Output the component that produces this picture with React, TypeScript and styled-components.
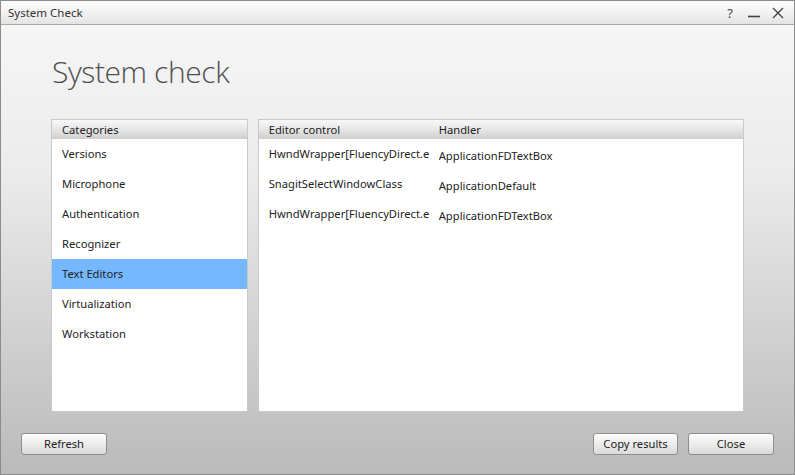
import React, {useState} from "react";
import styled, {createGlobalStyle} from "styled-components";

const GlobalStyle = createGlobalStyle`
  html, body {
    margin: 0;
    padding: 0;
    width: 795px;
    height: 475px;
    overflow: hidden;
    font-family: "Noto Sans", "Open Sans", sans-serif;
  }
`;

const Window = styled.div`
  width: 795px;
  height: 475px;
  box-sizing: border-box;
  border: 1px solid #8c8c8c;
  display: flex;
  flex-direction: column;
  background: linear-gradient(to bottom, #f7f7f7 0%, #ececec 35%, #bababa 100%);
`;

const TitleBar = styled.div`
  height: 24px;
  flex: none;
  box-sizing: border-box;
  display: flex;
  align-items: center;
  justify-content: space-between;
  padding: 0 4px 0 7px;
  background: linear-gradient(to bottom, #ffffff 0%, #e4e4e4 100%);
  border-bottom: 1px solid #a8a8a8;
  font-size: 11.5px;
  color: #333;
`;

const TitleButtons = styled.div`
  display: flex;
  align-items: center;
  height: 100%;
`;

const TitleButton = styled.div`
  width: 24px;
  height: 100%;
  display: flex;
  align-items: center;
  justify-content: center;
  color: #444;
  font-size: 13px;
`;

const Body = styled.div`
  flex: 1;
  display: flex;
  flex-direction: column;
  padding: 0 20px 19px 20px;
`;

const Heading = styled.h1`
  margin: 27px 0 0 31px;
  font-family: "Open Sans", "Noto Sans", sans-serif;
  font-weight: 300;
  font-size: 30px;
  line-height: 40px;
  color: #4e4e4e;
  letter-spacing: -0.4px;
`;

const Panels = styled.div`
  display: flex;
  gap: 10px;
  margin: 27px 30px 0 30px;
  height: 293px;
`;

const Panel = styled.div<{w: number}>`
  width: ${(p) => p.w}px;
  box-sizing: border-box;
  background: #fff;
  border: 1px solid #c9c9c9;
  display: flex;
  flex-direction: column;
`;

const Header = styled.div`
  height: 19px;
  flex: none;
  display: flex;
  align-items: center;
  padding: 0 0 1px 10px;
  box-sizing: border-box;
  font-size: 11.2px;
  color: #222;
  background: linear-gradient(to bottom, #f8f8f8 0%, #e6e6e6 50%, #cfcfcf 100%);
`;

const Row = styled.div<{selected?: boolean}>`
  height: 30px;
  box-sizing: border-box;
  display: flex;
  align-items: center;
  padding: 0 0 2px 10px;
  font-size: 11.2px;
  color: #222;
  background: ${(p) => (p.selected ? "#74b8ff" : "transparent")};
  cursor: default;
`;

const Cell = styled.div<{w?: number; drop?: number}>`
  width: ${(p) => (p.w ? `${p.w}px` : "auto")};
  margin-top: ${(p) => p.drop ?? 0}px;
  overflow: hidden;
  white-space: nowrap;
  flex: none;
`;

const Footer = styled.div`
  margin-top: auto;
  display: flex;
  align-items: center;
  gap: 10px;
`;

const Button = styled.button<{w?: number}>`
  width: ${(p) => p.w ?? 86}px;
  height: 22px;
  box-sizing: border-box;
  border: 1px solid #8e8e8e;
  border-radius: 3px;
  background: linear-gradient(to bottom, #fbfbfb 0%, #ececec 50%, #dadada 100%);
  font-family: "Noto Sans", "Open Sans", sans-serif;
  font-size: 11.2px;
  color: #222;
  padding: 0 0 1px 0;
`;

const Spacer = styled.div`
  flex: 1;
`;

const categories = [
  "Versions",
  "Microphone",
  "Authentication",
  "Recognizer",
  "Text Editors",
  "Virtualization",
  "Workstation",
];

const editors = [
  ["HwndWrapper[FluencyDirect.e", "ApplicationFDTextBox"],
  ["SnagitSelectWindowClass", "ApplicationDefault"],
  ["HwndWrapper[FluencyDirect.e", "ApplicationFDTextBox"],
];

export default function App() {
  const [selected, setSelected] = useState("Text Editors");

  return (
    <Window>
      <GlobalStyle />
      <TitleBar>
        <span>System Check</span>
        <TitleButtons>
          <TitleButton>?</TitleButton>
          <TitleButton>
            <svg width="14" height="14" viewBox="0 0 14 14">
              <line x1="1" y1="10.5" x2="13" y2="10.5" stroke="#444" strokeWidth="1.6" />
            </svg>
          </TitleButton>
          <TitleButton>
            <svg width="14" height="14" viewBox="0 0 14 14">
              <path d="M2 2 L12 12 M12 2 L2 12" stroke="#444" strokeWidth="1.4" />
            </svg>
          </TitleButton>
        </TitleButtons>
      </TitleBar>
      <Body>
        <Heading>System check</Heading>
        <Panels>
          <Panel w={197}>
            <Header>Categories</Header>
            {categories.map((c) => (
              <Row key={c} selected={c === selected} onClick={() => setSelected(c)}>
                {c}
              </Row>
            ))}
          </Panel>
          <Panel w={487}>
            <Header>
              <Cell w={170}>Editor control</Cell>
              <Cell>Handler</Cell>
            </Header>
            {editors.map(([a, b], i) => (
              <Row key={i}>
                <Cell w={166}>{a}</Cell>
                <Cell drop={4} style={{marginLeft: 4}}>{b}</Cell>
              </Row>
            ))}
          </Panel>
        </Panels>
        <Footer>
          <Button>Refresh</Button>
          <Spacer />
          <Button w={85}>Copy results</Button>
          <Button>Close</Button>
        </Footer>
      </Body>
    </Window>
  );
}
